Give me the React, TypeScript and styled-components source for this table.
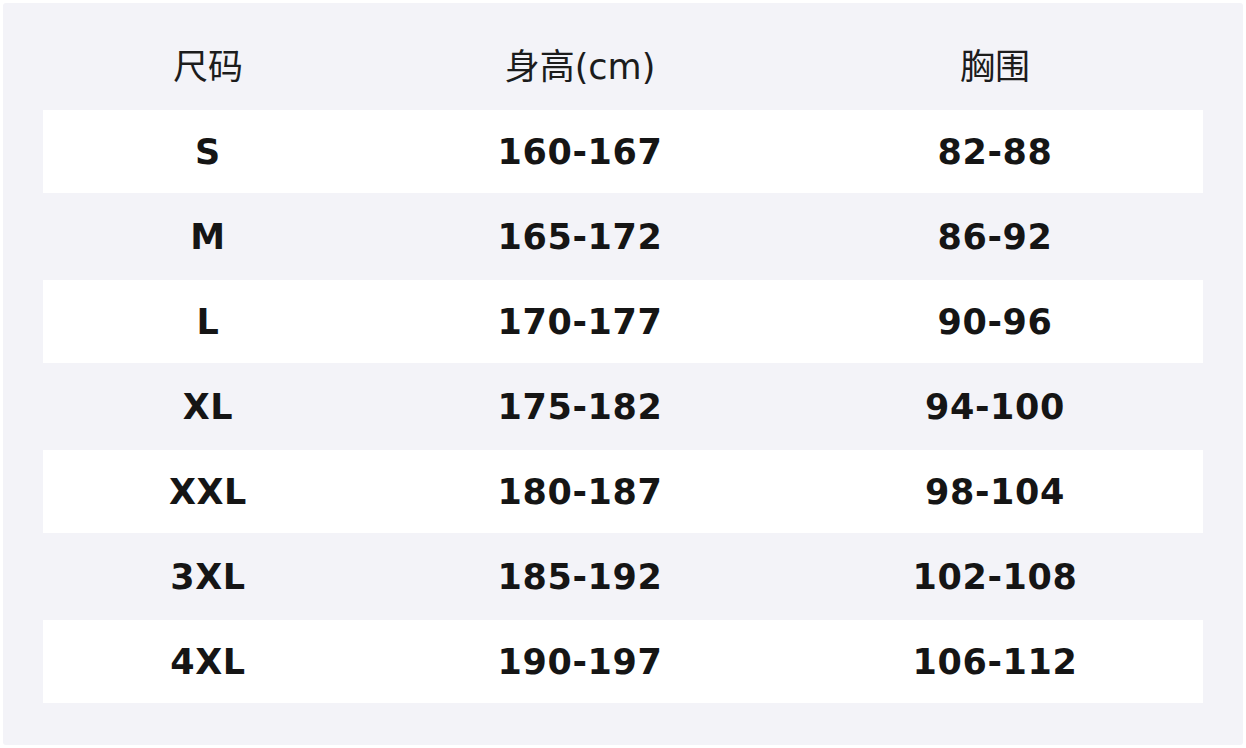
import styled, { createGlobalStyle } from "styled-components";

const GlobalStyle = createGlobalStyle`
  html, body {
    margin: 0;
    background: #ffffff;
  }
  body {
    padding: 3px;
    font-family: "DejaVu Sans", "Noto Sans CJK SC", sans-serif;
  }
`;

const sizes = [
  ["S", "160-167", "82-88"],
  ["M", "165-172", "86-92"],
  ["L", "170-177", "90-96"],
  ["XL", "175-182", "94-100"],
  ["XXL", "180-187", "98-104"],
  ["3XL", "185-192", "102-108"],
  ["4XL", "190-197", "106-112"],
];

const App = () => {
  return (
    <>
      <GlobalStyle />
      <Card>
        <Table>
          <HeadRow>
            <HeadCell>尺码</HeadCell>
            <HeadCell>身高(cm)</HeadCell>
            <HeadCell>胸围</HeadCell>
          </HeadRow>
          {sizes.map((row, i) => (
            <Row key={row[0]} $striped={i % 2 === 0}>
              {row.map((v, j) => (
                <Cell key={j}>{v}</Cell>
              ))}
            </Row>
          ))}
        </Table>
      </Card>
    </>
  );
};

export default App;

const Card = styled.div`
  width: 1240px;
  height: 742px;
  box-sizing: border-box;
  background: #f3f3f8;
  border-radius: 3px;
  padding: 22px 40px 40px;
`;

const Table = styled.div`
  display: flex;
  flex-direction: column;
`;

const HeadRow = styled.div`
  display: grid;
  grid-template-columns: 330px 414px 1fr;
  height: 85px;
  box-sizing: border-box;
  padding-bottom: 8px;
  align-items: center;
`;

const HeadCell = styled.div`
  text-align: center;
  font-size: 35px;
  color: #1c1c1c;
`;

const Row = styled.div<{ $striped: boolean }>`
  display: grid;
  grid-template-columns: 330px 414px 1fr;
  height: 85px;
  box-sizing: border-box;
  align-items: center;
  border-bottom: 2px solid transparent;
  background: ${(p) => (p.$striped ? "#ffffff" : "transparent")};
  background-clip: padding-box;
`;

const Cell = styled.div`
  text-align: center;
  font-size: 35px;
  font-weight: bold;
  letter-spacing: 0.6px;
  color: #151515;
  padding-top: 1px;
`;
